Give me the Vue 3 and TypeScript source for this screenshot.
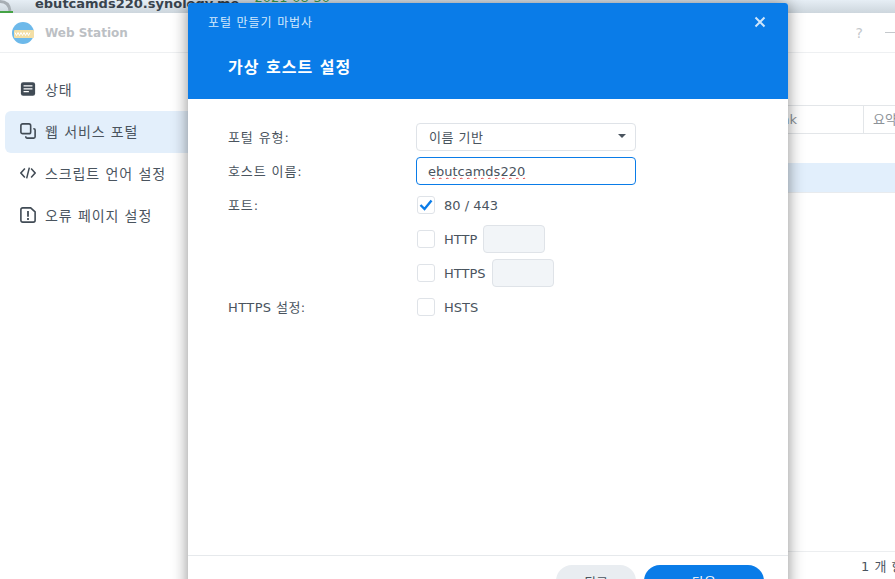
<script setup lang="ts">
interface NavItem { label: string; icon: string; active?: boolean }
const nav: NavItem[] = [
  { label: '상태', icon: 'status' },
  { label: '웹 서비스 포털', icon: 'portal', active: true },
  { label: '스크립트 언어 설정', icon: 'code' },
  { label: '오류 페이지 설정', icon: 'error' },
]
</script>

<template>
  <div class="page">
    <div class="strip">
      <svg class="lock" width="13" height="13" viewBox="0 0 13 13">
        <path d="M0 1.500Q9 1.500 10 11" fill="none" stroke="#a7aeb4" stroke-width="3" />
        <path d="M0 12h13" stroke="#45a345" stroke-width="2" />
      </svg>
      <span class="host">ebutcamds220.synology.me</span>
      <span class="date">2021-08-30</span>
    </div>

    <div class="window">
      <header class="win-head">
        <svg class="logo" width="24" height="24" viewBox="0 0 24 24">
          <circle cx="12" cy="12" r="11" fill="#6db9ea" />
          <rect x="3" y="9" width="20" height="8" rx="1" fill="#f3dfa6" />
          <path d="M4 11.500l1.500 3 1.500-3 1.500 3 1.500-3 1.500 3 1.500-3 1.500 3 1.500-3 1.500 3 1.500-3" fill="none" stroke="#fff" stroke-width="1" />
        </svg>
        <span class="win-title">Web Station</span>
        <span class="help">?</span>
        <span class="minimize"></span>
      </header>

      <div class="win-body">
        <aside class="side">
          <div v-for="item in nav" :key="item.label" class="nav-item" :class="{ active: item.active }">
            <svg class="nav-icon" width="16" height="16" viewBox="0 0 18 18">
              <template v-if="item.icon === 'status'">
                <rect x="1" y="1.500" width="16" height="15" rx="2.500" fill="#414b55" />
                <path d="M4 5.500h10M4 8.800h10M4 12h6" stroke="#fff" stroke-width="1.500" />
              </template>
              <template v-else-if="item.icon === 'portal'">
                <rect x="1" y="1" width="11" height="11" rx="2" fill="none" stroke="#414b55" stroke-width="1.800" />
                <path d="M15 6.500h.5a1.500 1.500 0 0 1 1.500 1.500v7.500a1.500 1.500 0 0 1-1.500 1.500H8a1.500 1.500 0 0 1-1.500-1.500V15" fill="none" stroke="#414b55" stroke-width="1.800" />
              </template>
              <template v-else-if="item.icon === 'code'">
                <path d="M5.500 4L1 9l4.500 5M12.500 4L17 9l-4.500 5M10.500 3L7.500 15" fill="none" stroke="#414b55" stroke-width="1.700" />
              </template>
              <template v-else>
                <path d="M3 1h9l5 4.500V15a2 2 0 0 1-2 2H3a2 2 0 0 1-2-2V3a2 2 0 0 1 2-2z" fill="none" stroke="#414b55" stroke-width="1.800" />
                <path d="M9 4.500v6.500M9 12.500v2" stroke="#414b55" stroke-width="2" />
              </template>
            </svg>
            <span>{{ item.label }}</span>
          </div>
        </aside>

        <main class="main">
          <div class="table-head">
            <div class="col-first">Link</div>
            <div class="col-last">요약</div>
          </div>
          <div class="table-row"></div>
          <div class="table-row selected"></div>
          <div class="table-space"></div>
          <div class="table-foot">1 개 항목</div>
        </main>
      </div>
    </div>

    <section class="dialog">
      <header class="dlg-head">
        <div class="dlg-top">
          <span class="dlg-title">포털 만들기 마법사</span>
          <svg class="dlg-close" width="12" height="12" viewBox="0 0 12 12">
            <path d="M1.500 1.500l9 9M10.500 1.500l-9 9" stroke="#cfe6fb" stroke-width="2" />
          </svg>
        </div>
        <h1 class="dlg-sub">가상 호스트 설정</h1>
      </header>

      <div class="form">
        <label class="f-label">포털 유형:</label>
        <div class="select"><span>이름 기반</span><i class="caret"></i></div>

        <label class="f-label">호스트 이름:</label>
        <input class="text-input" value="ebutcamds220" />

        <label class="f-label">포트:</label>
        <div class="check-row">
          <span class="box">
            <svg width="14" height="12" viewBox="0 0 14 12"><path d="M1.500 6l4 4 7-8.500" fill="none" stroke="#0a7ce8" stroke-width="2.400" /></svg>
          </span>
          <span>80 / 443</span>
        </div>

        <span></span>
        <div class="check-row"><span class="box"></span><span>HTTP</span><span class="mini"></span></div>

        <span></span>
        <div class="check-row"><span class="box"></span><span>HTTPS</span><span class="mini"></span></div>

        <label class="f-label tight">HTTPS 설정:</label>
        <div class="check-row"><span class="box"></span><span>HSTS</span></div>
      </div>

      <footer class="dlg-foot">
        <button class="btn back">뒤로</button>
        <button class="btn next">다음</button>
      </footer>
    </section>
  </div>
</template>

<style>
html, body { margin: 0; background: #fff; }
</style>

<style scoped>
.page {
  position: relative;
  width: 895px;
  height: 579px;
  overflow: hidden;
  font-family: "DejaVu Sans", "Noto Sans CJK KR", sans-serif;
  font-size: 13px;
  color: #4a545e;
  display: flex;
  flex-direction: column;
  background: #fff;
}
.strip {
  height: 13px;
  flex: none;
  display: flex;
  align-items: flex-end;
  overflow: hidden;
  background: linear-gradient(#e6eef5, #cdd6dd);
  position: relative;
}
.lock { flex: none; margin-right: 22px; }
.host {
  font-weight: 700;
  font-size: 13px;
  line-height: 13px;
  color: #39434d;
  white-space: nowrap;
  position: relative;
  top: -3px;
}
.date {
  margin-left: 15px;
  font-size: 13px;
  line-height: 13px;
  color: #3fa34d;
  white-space: nowrap;
  position: relative;
  top: -9px;
}
.window {
  flex: 1;
  min-height: 0;
  display: flex;
  flex-direction: column;
  background: #fff;
}
.win-head {
  height: 39px;
  flex: none;
  display: flex;
  align-items: center;
  padding-left: 11px;
  border-bottom: 1px solid #eef0f2;
  position: relative;
}
.logo { margin-right: 10px; flex: none; }
.win-title { font-weight: 700; font-size: 12px; color: #bcc0c4; flex: 1; }
.help { color: #c4c8cc; font-size: 14px; margin-right: 22px; }
.minimize { width: 12px; height: 1.500px; background: #c4c8cc; margin-right: -2px; }
.win-body { flex: 1; min-height: 0; display: flex; }
.side { width: 188px; flex: none; padding: 16px 0 0 5px; box-sizing: border-box; }
.nav-item {
  height: 42px;
  box-sizing: border-box;
  display: flex;
  align-items: center;
  padding: 0 0 2px 15px;
  gap: 9px;
  border-radius: 6px 0 0 6px;
  white-space: nowrap;
  font-size: 14px;
  letter-spacing: 0.900px;
}
.nav-item.active { background: #e3effb; }
.nav-icon { flex: none; }
.main { flex: 1; min-width: 0; display: flex; flex-direction: column; padding-top: 52px; }
.table-head {
  height: 27px;
  flex: none;
  display: flex;
  align-items: center;
  border-top: 1px solid #e3e6e9;
  border-bottom: 1px solid #e3e6e9;
  color: #8c9298;
  white-space: nowrap;
  overflow: hidden;
}
.col-first { flex: 1; text-align: right; padding-right: 66px; }
.col-last {
  width: 32px;
  flex: none;
  height: 100%;
  line-height: 27px;
  box-sizing: border-box;
  padding-left: 9px;
  border-left: 1px solid #e3e6e9;
}
.table-row { height: 29px; flex: none; }
.table-row.selected { background: #e2effc; border-bottom: 1px solid #e8ebee; }
.table-space { flex: 1; }
.table-foot {
  height: 27px;
  flex: none;
  border-top: 1px solid #eceef0;
  padding-left: 673px;
  color: #4a545e;
  white-space: nowrap;
  overflow: hidden;
  line-height: 29px;
  letter-spacing: 0.500px;
}
.dialog {
  position: absolute;
  left: 188px;
  top: 3px;
  width: 600px;
  height: 610px;
  background: #fff;
  border-radius: 3px 3px 0 0;
  box-shadow: 0 0 16px rgba(0, 0, 0, 0.45);
  display: flex;
  flex-direction: column;
}
.dlg-head {
  height: 96px;
  flex: none;
  background: #0a7ce8;
  border-radius: 3px 3px 0 0;
  color: #fff;
  box-sizing: border-box;
}
.dlg-top {
  height: 38px;
  display: flex;
  align-items: center;
  justify-content: space-between;
  padding: 0 22px 0 20px;
}
.dlg-title { font-size: 12px; color: #d3e8fc; letter-spacing: 0.900px; position: relative; top: -1px; }
.dlg-sub {
  margin: 15px 0 0 40px;
  font-size: 16px;
  line-height: 24px;
  font-weight: 700;
  letter-spacing: 1px;
}
.form {
  padding: 24px 0 0 40px;
  display: grid;
  grid-template-columns: 188px 220px;
  grid-auto-rows: 28px;
  row-gap: 6px;
  align-items: center;
  flex: none;
}
.f-label { letter-spacing: 0.900px; white-space: nowrap; position: relative; top: -1px; }
.f-label.tight { letter-spacing: 0.400px; }
.select, .text-input {
  width: 220px;
  height: 28px;
  box-sizing: border-box;
  border-radius: 4px;
  font: inherit;
  color: inherit;
  background: #fff;
}
.select {
  padding: 0 12px 2px;
  border: 1px solid #dfe3e8;
  display: flex;
  align-items: center;
  justify-content: space-between;
  letter-spacing: 0.500px;
}
.caret {
  width: 0;
  height: 0;
  border-left: 4.500px solid transparent;
  border-right: 4.500px solid transparent;
  border-top: 4px solid #4a545e;
  margin-right: -3px;
}
.text-input {
  padding: 0 11px;
  border: 1px solid #0a7ce8;
  outline: none;
  text-decoration: underline wavy #e23b3b 1px;
}
.check-row { display: flex; align-items: center; white-space: nowrap; }
.box {
  width: 18px;
  height: 18px;
  flex: none;
  box-sizing: border-box;
  border: 1px solid #dfe3e8;
  border-radius: 3px;
  margin: 0 9px 0 1px;
  display: flex;
  align-items: center;
  justify-content: center;
}
.mini {
  width: 62px;
  height: 28px;
  box-sizing: border-box;
  margin-left: 6px;
  border: 1px solid #dfe3e8;
  border-radius: 4px;
  background: #f2f5f8;
}
.dlg-foot {
  margin-top: auto;
  height: 58px;
  flex: none;
  box-sizing: border-box;
  border-top: 1px solid #e6e9ec;
  padding: 9px 24px 0 0;
  display: flex;
  justify-content: flex-end;
  align-items: flex-start;
  gap: 8px;
}
.btn {
  height: 32px;
  border: none;
  border-radius: 16px;
  font: inherit;
  padding: 0;
}
.back { width: 80px; background: #e9edf1; color: #4a545e; }
.next { width: 120px; background: #0a7ce8; color: #fff; }
</style>
